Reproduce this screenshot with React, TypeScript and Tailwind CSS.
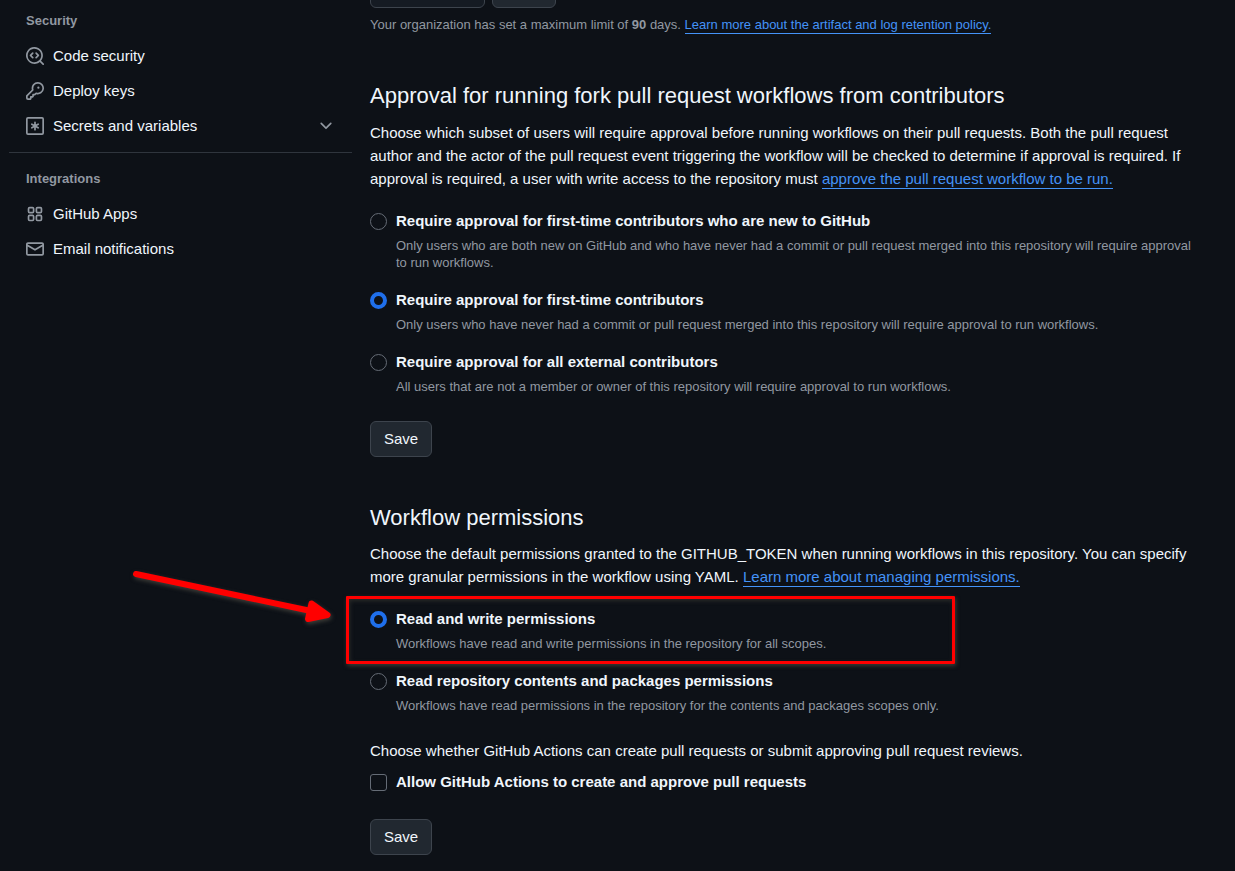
import type { ReactNode } from "react";

const codescan = (
  <>
    <path d="M8.47 4.97a.75.75 0 0 0 0 1.06L9.94 7.5 8.47 8.97a.75.75 0 1 0 1.06 1.06l2-2a.75.75 0 0 0 0-1.06l-2-2a.75.75 0 0 0-1.06 0ZM6.53 6.03a.75.75 0 0 0-1.06-1.06l-2 2a.75.75 0 0 0 0 1.06l2 2a.75.75 0 1 0 1.06-1.06L5.06 7.5l1.47-1.47Z" />
    <path d="M12.246 13.307a7.501 7.501 0 1 1 1.06-1.06l2.474 2.473a.749.749 0 1 1-1.06 1.06l-2.474-2.473ZM1.5 7.5a6.002 6.002 0 0 0 3.608 5.504 6.002 6.002 0 0 0 6.486-1.117.748.748 0 0 1 .292-.293A6 6 0 1 0 1.5 7.5Z" />
  </>
);

const key = (
  <path d="M10.5 0a5.499 5.499 0 1 1-1.288 10.848l-.932.932a.749.749 0 0 1-.53.22H7v.75a.749.749 0 0 1-.22.53l-.5.5a.749.749 0 0 1-.53.22H5v.75a.749.749 0 0 1-.22.53l-.5.5a.749.749 0 0 1-.53.22h-2A1.75 1.75 0 0 1 0 14.25v-2c0-.199.079-.389.22-.53l4.932-4.932A5.5 5.5 0 0 1 10.5 0Zm-4 5.5c-.001.431.069.86.205 1.269a.75.75 0 0 1-.181.768L1.5 12.56v1.69c0 .138.112.25.25.25h1.69l.06-.06v-1.19a.75.75 0 0 1 .75-.75h1.19l.06-.06v-1.19a.75.75 0 0 1 .75-.75h1.19l1.023-1.025a.75.75 0 0 1 .768-.18A4 4 0 1 0 6.5 5.5ZM11 6a1 1 0 1 1 0-2 1 1 0 0 1 0 2Z" />
);

const asterisk = (
  <g fill="none" stroke="currentColor" strokeWidth="1.5" strokeLinecap="round">
    <rect x="0.75" y="0.75" width="14.5" height="14.5" rx="1" />
    <path d="M8 4.75v6.5M5.2 6.4l5.6 3.2M10.8 6.4 5.2 9.6" />
  </g>
);

const apps = (
  <g fill="none" stroke="currentColor" strokeWidth="1.5">
    <rect x="2.25" y="2.25" width="4.5" height="4.5" rx="1" />
    <rect x="9.25" y="2.25" width="4.5" height="4.5" rx="1" />
    <rect x="2.25" y="9.25" width="4.5" height="4.5" rx="1" />
    <rect x="9.25" y="9.25" width="4.5" height="4.5" rx="1" />
  </g>
);

const mail = (
  <path d="M1.75 2h12.5c.966 0 1.75.784 1.75 1.75v8.5A1.75 1.75 0 0 1 14.25 14H1.75A1.75 1.75 0 0 1 0 12.25v-8.5C0 2.784.784 2 1.75 2ZM1.5 12.251c0 .138.112.25.25.25h12.5a.25.25 0 0 0 .25-.25V5.809L8.38 9.397a.75.75 0 0 1-.76 0L1.5 5.809v6.442Zm13-8.181v-.32a.25.25 0 0 0-.25-.25H1.75a.25.25 0 0 0-.25.25v.32L8 7.88Z" />
);

const chevron = (
  <path d="M12.78 5.22a.749.749 0 0 1 0 1.06l-4.25 4.25a.749.749 0 0 1-1.06 0L3.22 6.28a.749.749 0 1 1 1.06-1.06L8 8.939l3.72-3.719a.749.749 0 0 1 1.06 0Z" />
);

function Icon({ children }: { children: ReactNode }) {
  return (
    <svg viewBox="0 0 16 16" fill="currentColor" aria-hidden="true" className="size-[18px] shrink-0 text-[#9198a1]">
      {children}
    </svg>
  );
}

function NavLink({ icon, children }: { icon: ReactNode; children: ReactNode }) {
  return (
    <li>
      <a href="#" className="flex h-[35px] items-center gap-[9px] px-[17px]">
        <Icon>{icon}</Icon>
        {children}
      </a>
    </li>
  );
}

function TextLink({ children }: { children: ReactNode }) {
  return (
    <a href="#" className="border-b border-[#4493f8] pb-px text-[#4493f8]">
      {children}
    </a>
  );
}

function SaveButton() {
  return (
    <button type="submit" className="h-9 rounded-md border border-[#3d444d] bg-[#212830] px-[13px] pb-0.5">
      Save
    </button>
  );
}

type OptionProps = {
  id: string;
  name: string;
  label: string;
  note: string;
  checked?: boolean;
};

function Option({ id, name, label, note, checked }: OptionProps) {
  return (
    <div className="flex gap-[9px]">
      <input
        type="radio"
        id={id}
        name={name}
        defaultChecked={checked}
        aria-describedby={`${id}-note`}
        className="mt-1 size-[17px] shrink-0 appearance-none rounded-full border border-[#656c76] checked:border-4 checked:border-[#1f6feb]"
      />
      <div>
        <label htmlFor={id} className="block font-bold">
          {label}
        </label>
        <p id={`${id}-note`} className="mt-[5px] text-[13px] leading-[17px] text-[#9198a1]">
          {note}
        </p>
      </div>
    </div>
  );
}

export default function App() {
  return (
    <div className="flex min-h-screen bg-[#0d1117] pr-8 pl-[9px] font-['Liberation_Sans',Arial,sans-serif] text-[15px] leading-[23px] text-[#f0f6fc]">
      <nav aria-label="Settings" className="w-[343px] shrink-0 pt-[11px]">
        <h3 className="px-[17px] text-[13px] leading-5 font-bold text-[#9198a1]">Security</h3>
        <ul className="mt-[7px]">
          <NavLink icon={codescan}>Code security</NavLink>
          <NavLink icon={key}>Deploy keys</NavLink>
          <li>
            <button type="button" className="flex h-[35px] w-full items-center gap-[9px] px-[17px] text-left">
              <Icon>{asterisk}</Icon>
              <span className="grow">Secrets and variables</span>
              <Icon>{chevron}</Icon>
            </button>
          </li>
        </ul>
        <hr className="mt-[9px] border-[#2f353d]" />
        <h3 className="mt-4 px-[17px] text-[13px] leading-5 font-bold text-[#9198a1]">Integrations</h3>
        <ul className="mt-[7px]">
          <NavLink icon={apps}>GitHub Apps</NavLink>
          <NavLink icon={mail}>Email notifications</NavLink>
        </ul>
      </nav>

      <main className="ml-[18px] min-w-0 grow pb-4">
        <div className="flex h-2 items-end gap-[7px] overflow-hidden">
          <input
            type="text"
            aria-label="Retention days"
            className="h-9 w-[115px] shrink-0 rounded-md border border-[#3d444d] bg-[#151b23]"
          />
          <button
            type="button"
            aria-label="Save retention"
            className="h-9 w-16 shrink-0 rounded-md border border-[#3d444d] bg-[#212830]"
          />
        </div>
        <p className="mt-[7px] text-[13px] leading-5 text-[#9198a1]">
          Your organization has set a maximum limit of <strong>90</strong> days.{" "}
          <TextLink>Learn more about the artifact and log retention policy.</TextLink>
        </p>

        <form className="mt-11" onSubmit={(e) => e.preventDefault()}>
          <h2 className="text-[22px] leading-[33px]">
            Approval for running fork pull request workflows from contributors
          </h2>
          <p className="mt-[9px]">
            Choose which subset of users will require approval before running workflows on their pull requests. Both
            the pull request author and the actor of the pull request event triggering the workflow will be checked to
            determine if approval is required. If approval is required, a user with write access to the repository
            must <TextLink>approve the pull request workflow to be run.</TextLink>
          </p>
          <div className="mt-[19px] flex flex-col gap-[17px]">
            <Option
              id="first-time-github"
              name="approval"
              label="Require approval for first-time contributors who are new to GitHub"
              note="Only users who are both new on GitHub and who have never had a commit or pull request merged into this repository will require approval to run workflows."
            />
            <Option
              id="first-time"
              name="approval"
              checked
              label="Require approval for first-time contributors"
              note="Only users who have never had a commit or pull request merged into this repository will require approval to run workflows."
            />
            <Option
              id="all-external"
              name="approval"
              label="Require approval for all external contributors"
              note="All users that are not a member or owner of this repository will require approval to run workflows."
            />
          </div>
          <div className="mt-[26px] flex">
            <SaveButton />
          </div>
        </form>

        <form className="mt-11" onSubmit={(e) => e.preventDefault()}>
          <h2 className="text-[22px] leading-[33px]">Workflow permissions</h2>
          <p className="mt-2">
            Choose the default permissions granted to the GITHUB_TOKEN when running workflows in this repository. You
            can specify more granular permissions in the workflow using YAML.{" "}
            <TextLink>Learn more about managing permissions.</TextLink>
          </p>
          <div className="mt-[19px] flex flex-col gap-[17px]">
            <div className="relative">
              <Option
                id="read-write"
                name="permissions"
                checked
                label="Read and write permissions"
                note="Workflows have read and write permissions in the repository for all scopes."
              />
              <div className="pointer-events-none absolute -top-[11px] -left-6 h-[68px] w-[609px] rounded-[1px] border-3 border-[#ff0000] shadow-[1px_2px_4px_#3a3a35,inset_1px_2px_4px_#2a2b29]" />
              <svg
                viewBox="0 0 220 70"
                aria-hidden="true"
                className="pointer-events-none absolute -top-[43px] -left-[244px] h-[70px] w-[220px] drop-shadow-[1px_2px_2px_#3f3f3a]"
              >
                <path d="M10 10 185 47" stroke="#ff0000" strokeWidth="6" strokeLinecap="round" />
                <path
                  d="M185.500 39.500 201.500 51 182 55Z"
                  fill="#ff0000"
                  stroke="#ff0000"
                  strokeWidth="6"
                  strokeLinejoin="round"
                />
              </svg>
            </div>
            <Option
              id="read-only"
              name="permissions"
              label="Read repository contents and packages permissions"
              note="Workflows have read permissions in the repository for the contents and packages scopes only."
            />
          </div>
          <p className="mt-[25px]">
            Choose whether GitHub Actions can create pull requests or submit approving pull request reviews.
          </p>
          <div className="mt-2 flex gap-[9px]">
            <input
              type="checkbox"
              id="allow-approve"
              className="mt-1 size-[17px] shrink-0 appearance-none rounded-[3px] border border-[#656c76]"
            />
            <label htmlFor="allow-approve" className="font-bold">
              Allow GitHub Actions to create and approve pull requests
            </label>
          </div>
          <div className="mt-[26px] flex">
            <SaveButton />
          </div>
        </form>
      </main>
    </div>
  );
}
